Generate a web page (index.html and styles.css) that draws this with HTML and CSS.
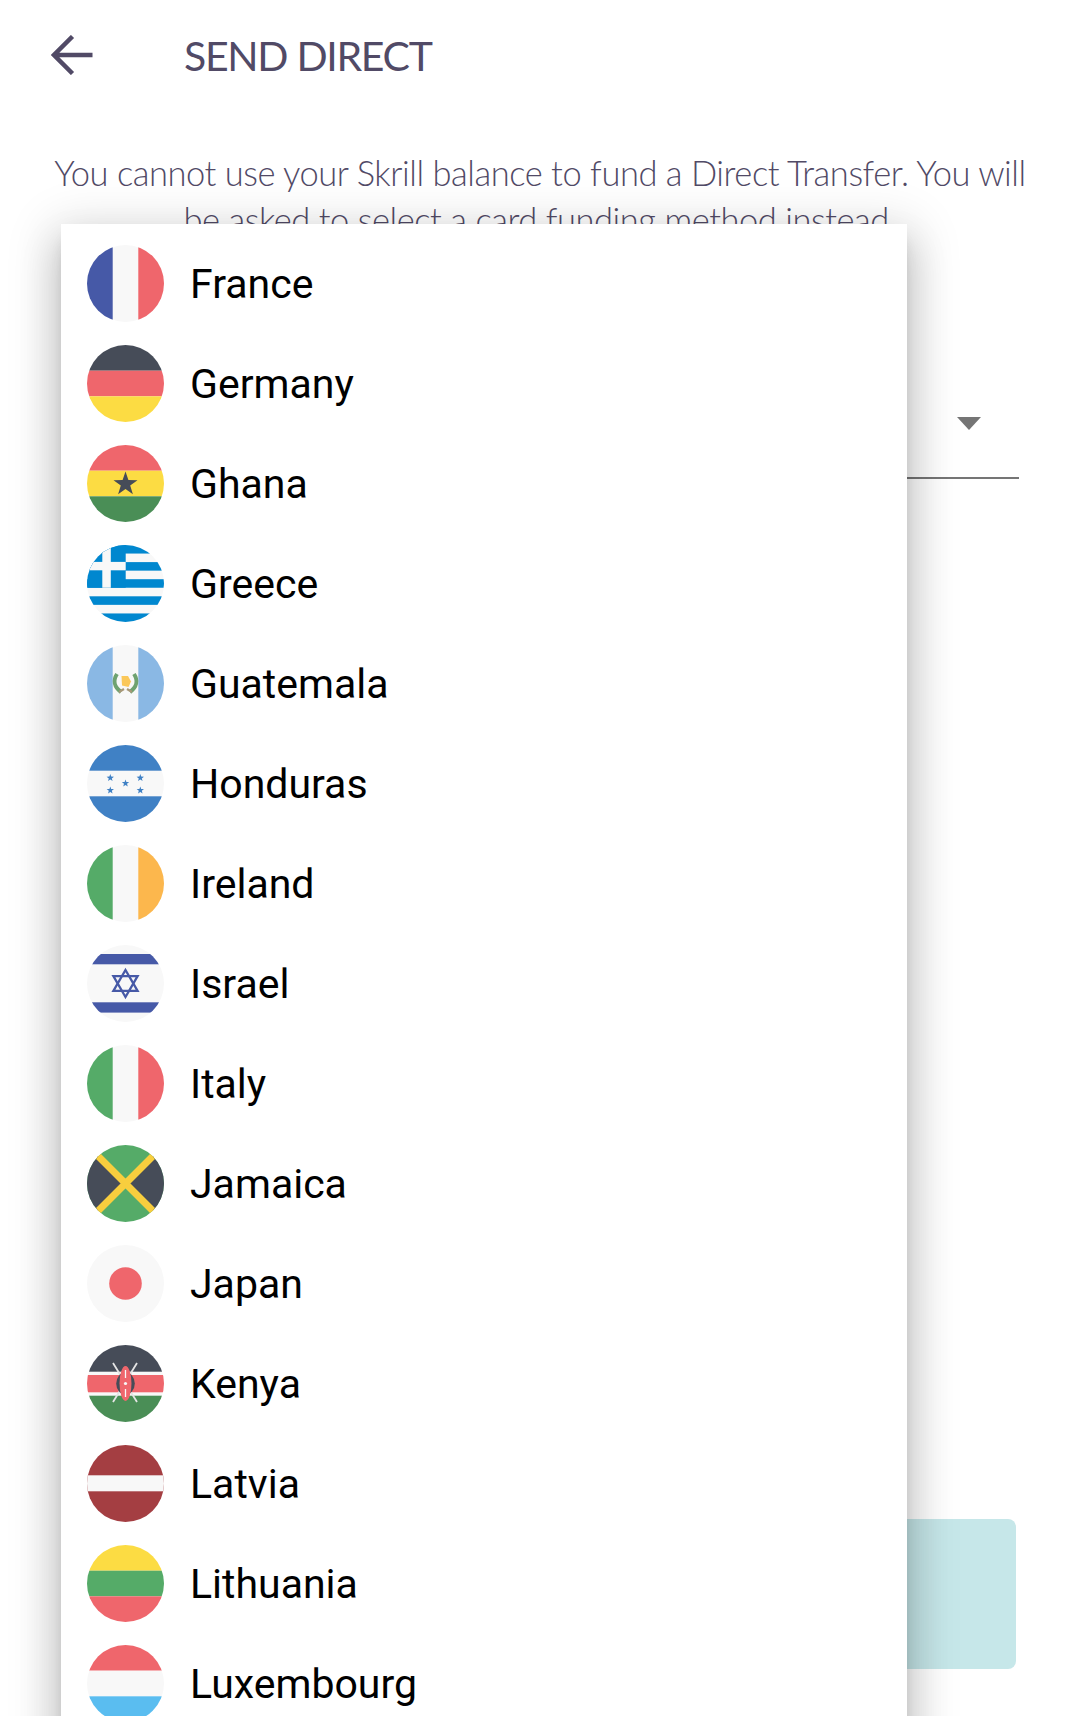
FILE: index.html
```html
<!DOCTYPE html>
<html lang="en">
<head>
<meta charset="utf-8">
<title>Send Direct</title>
<link rel="stylesheet" href="styles.css">
</head>
<body>
<main class="page">
  <header class="topbar">
    <svg class="back" viewBox="0 0 42 40" aria-hidden="true"><path d="M41.5 20H4M21.5 1.5 3 20l18.5 18.5"/></svg>
    <h1 class="title">SEND DIRECT</h1>
  </header>
  <p class="notice">You cannot use your Skrill balance to fund a Direct Transfer. You will be asked to select a card funding method instead.</p>
  <div class="field"><span class="caret"></span></div>
  <div class="action"></div>

  <ul class="menu">
    <li class="row"><svg class="flag" viewBox="0 0 77 77"><rect width="77" height="77" fill="#f8f8f8"/><rect width="25.7" height="77" fill="#4659a7"/><rect x="51.3" width="25.7" height="77" fill="#ef666c"/></svg><span>France</span></li>
    <li class="row"><svg class="flag" viewBox="0 0 77 77"><rect width="77" height="25.7" fill="#464c58"/><rect y="25.7" width="77" height="25.6" fill="#ef666c"/><rect y="51.3" width="77" height="25.7" fill="#fcdc43"/></svg><span>Germany</span></li>
    <li class="row"><svg class="flag" viewBox="0 0 77 77"><rect width="77" height="25.7" fill="#ef666c"/><rect y="25.7" width="77" height="25.6" fill="#fcdc43"/><rect y="51.3" width="77" height="25.7" fill="#4a8e56"/><polygon points="38.5,26.5 41.4,35 50.5,35.2 43.2,40.6 45.9,49.3 38.5,44.1 31.1,49.3 33.8,40.6 26.5,35.2 35.6,35" fill="#464c58"/></svg><span>Ghana</span></li>
    <li class="row"><svg class="flag" viewBox="0 0 77 77"><rect width="77" height="77" fill="#f8f8f8"/><g fill="#0087cf"><rect width="77" height="8.55"/><rect y="17.1" width="77" height="8.55"/><rect y="34.2" width="77" height="8.55"/><rect y="51.3" width="77" height="8.55"/><rect y="68.45" width="77" height="8.55"/><rect width="38.7" height="42.75"/></g><g fill="#f8f8f8"><rect x="15.3" width="8.5" height="42.75"/><rect y="16.9" width="38.7" height="8.4"/></g></svg><span>Greece</span></li>
    <li class="row"><svg class="flag" viewBox="0 0 77 77"><rect width="77" height="77" fill="#f8f8f8"/><rect width="25.7" height="77" fill="#8ab8e4"/><rect x="51.3" width="25.7" height="77" fill="#8ab8e4"/><path d="M30 29c-4 6-3 13 4 18M47 29c4 6 3 13-4 18" fill="none" stroke="#6ea270" stroke-width="4"/><path d="M34.500 31h6.500l3 5.500-2.500 5.500-6.500-1.500z" fill="#fbc85a"/><path d="M32 47l5-3M45 47l-5-3" stroke="#a89878" stroke-width="2.200"/></svg><span>Guatemala</span></li>
    <li class="row"><svg class="flag" viewBox="0 0 77 77"><rect width="77" height="77" fill="#f8f8f8"/><rect width="77" height="25.7" fill="#4081c5"/><rect y="51.3" width="77" height="25.7" fill="#4081c5"/><g fill="#4081c5"><polygon points="23.3,29 24.2,31.6 27,31.7 24.8,33.4 25.6,36 23.3,34.5 21,36 21.8,33.4 19.6,31.7 22.4,31.6"/><polygon points="53.3,29 54.2,31.6 57,31.7 54.8,33.4 55.6,36 53.3,34.5 51,36 51.8,33.4 49.6,31.7 52.4,31.6"/><polygon points="38.5,34.4 39.4,37 42.2,37.1 40,38.8 40.8,41.4 38.5,39.9 36.2,41.4 37,38.8 34.8,37.1 37.6,37"/><polygon points="23.3,41.4 24.2,44 27,44.1 24.8,45.8 25.6,48.4 23.3,46.9 21,48.4 21.8,45.8 19.6,44.1 22.4,44"/><polygon points="53.3,41.4 54.2,44 57,44.1 54.8,45.8 55.6,48.4 53.3,46.9 51,48.4 51.8,45.8 49.6,44.1 52.4,44"/></g></svg><span>Honduras</span></li>
    <li class="row"><svg class="flag" viewBox="0 0 77 77"><rect width="77" height="77" fill="#f8f8f8"/><rect width="25.7" height="77" fill="#55ab68"/><rect x="51.3" width="25.7" height="77" fill="#fcb74d"/></svg><span>Ireland</span></li>
    <li class="row"><svg class="flag" viewBox="0 0 77 77"><rect width="77" height="77" fill="#f8f8f8"/><rect y="9" width="77" height="10.3" fill="#4659a7"/><rect y="57.3" width="77" height="10.3" fill="#4659a7"/><g fill="none" stroke="#4659a7" stroke-width="2.3"><polygon points="38.5,25 50.6,45.8 26.4,45.8"/><polygon points="38.5,52 50.6,31.2 26.4,31.2"/></g></svg><span>Israel</span></li>
    <li class="row"><svg class="flag" viewBox="0 0 77 77"><rect width="77" height="77" fill="#f8f8f8"/><rect width="25.7" height="77" fill="#55ab68"/><rect x="51.3" width="25.7" height="77" fill="#ef666c"/></svg><span>Italy</span></li>
    <li class="row"><svg class="flag" viewBox="0 0 77 77"><rect width="77" height="77" fill="#55ab68"/><polygon points="0,0 38.5,38.5 0,77" fill="#464c58"/><polygon points="77,0 38.5,38.5 77,77" fill="#464c58"/><path d="M8 8 69 69M69 8 8 69" stroke="#f8ce3e" stroke-width="7"/></svg><span>Jamaica</span></li>
    <li class="row"><svg class="flag" viewBox="0 0 77 77"><rect width="77" height="77" fill="#f8f8f8"/><circle cx="38.5" cy="38.5" r="16.3" fill="#ef666c"/></svg><span>Japan</span></li>
    <li class="row"><svg class="flag" viewBox="0 0 77 77"><rect width="77" height="77" fill="#f8f8f8"/><rect width="77" height="26.7" fill="#464c58"/><rect y="30" width="77" height="17.3" fill="#ef666c"/><rect y="50.7" width="77" height="26.3" fill="#4a8e56"/><path d="M26 18 50 57M50 18 26 57" stroke="#e4e4e4" stroke-width="1.8"/><ellipse cx="38.5" cy="38.5" rx="9.3" ry="11" fill="#464c58"/><ellipse cx="38.5" cy="38.5" rx="6" ry="17.5" fill="#ef666c"/><path d="M38.5 25v8M38.5 44v8" stroke="#f8f8f8" stroke-width="1.3"/><circle cx="38.5" cy="38.5" r="1.6" fill="#f8f8f8"/></svg><span>Kenya</span></li>
    <li class="row"><svg class="flag" viewBox="0 0 77 77"><rect width="77" height="77" fill="#a43e42"/><rect y="30.3" width="77" height="16" fill="#f8f8f8"/></svg><span>Latvia</span></li>
    <li class="row"><svg class="flag" viewBox="0 0 77 77"><rect width="77" height="25.7" fill="#fcdc43"/><rect y="25.7" width="77" height="25.6" fill="#55ab68"/><rect y="51.3" width="77" height="25.7" fill="#ef666c"/></svg><span>Lithuania</span></li>
    <li class="row"><svg class="flag" viewBox="0 0 77 77"><rect width="77" height="25.7" fill="#ef666c"/><rect y="25.7" width="77" height="25.6" fill="#f8f8f8"/><rect y="51.3" width="77" height="25.7" fill="#5abdf0"/></svg><span>Luxembourg</span></li>
  </ul>
</main>
</body>
</html>
```
FILE: styles.css
```css
* { box-sizing: border-box; }
html, body { margin: 0; padding: 0; background: #fff; }
body { height: 1716px; overflow: hidden; }

.page {
  position: relative;
  height: 1716px;
  overflow: hidden;
  display: flex;
  flex-direction: column;
  font-family: "Lato", sans-serif;
  color: #514a66;
}

.topbar {
  display: flex;
  align-items: center;
  height: 110px;
  padding-left: 51px;
  gap: 91px;
}
.back { width: 42px; height: 40px; flex: none; }
.back path { fill: none; stroke: #514a66; stroke-width: 4.5; }
.title { margin: 0; font-size: 41px; font-weight: 400; letter-spacing: -1.3px; }

.notice {
  margin: 39px 44px 0;
  font-size: 34.5px;
  font-weight: 300;
  letter-spacing: -0.46px;
  line-height: 47px;
  text-align: center;
}

.field {
  position: relative;
  margin: 0 61px 0 64px;
  height: 236px;
  border-bottom: 2px solid #757575;
}
.caret {
  position: absolute;
  right: 38px;
  top: 174px;
  border-left: 12.5px solid transparent;
  border-right: 12.5px solid transparent;
  border-top: 13px solid #757575;
}

.action {
  margin: 1040px 64px 0;
  height: 150px;
  border-radius: 8px;
  background: #c6e7e9;
}

.menu {
  position: absolute;
  left: 61px;
  top: 224px;
  width: 846px;
  height: 1600px;
  margin: 0;
  padding: 9.5px 0 0;
  list-style: none;
  background: #fff;
  box-shadow: 0 24px 38px 3px rgba(0,0,0,.14), 0 9px 46px 8px rgba(0,0,0,.14), 0 11px 15px -7px rgba(0,0,0,.2);
}
.row {
  display: flex;
  align-items: center;
  gap: 26px;
  height: 100px;
  padding-left: 26px;
  font-family: "Roboto", sans-serif;
  font-size: 41px;
  color: #000;
}
.row span { padding-top: 1px; }
.flag { width: 77px; height: 77px; border-radius: 50%; flex: none; }
```
